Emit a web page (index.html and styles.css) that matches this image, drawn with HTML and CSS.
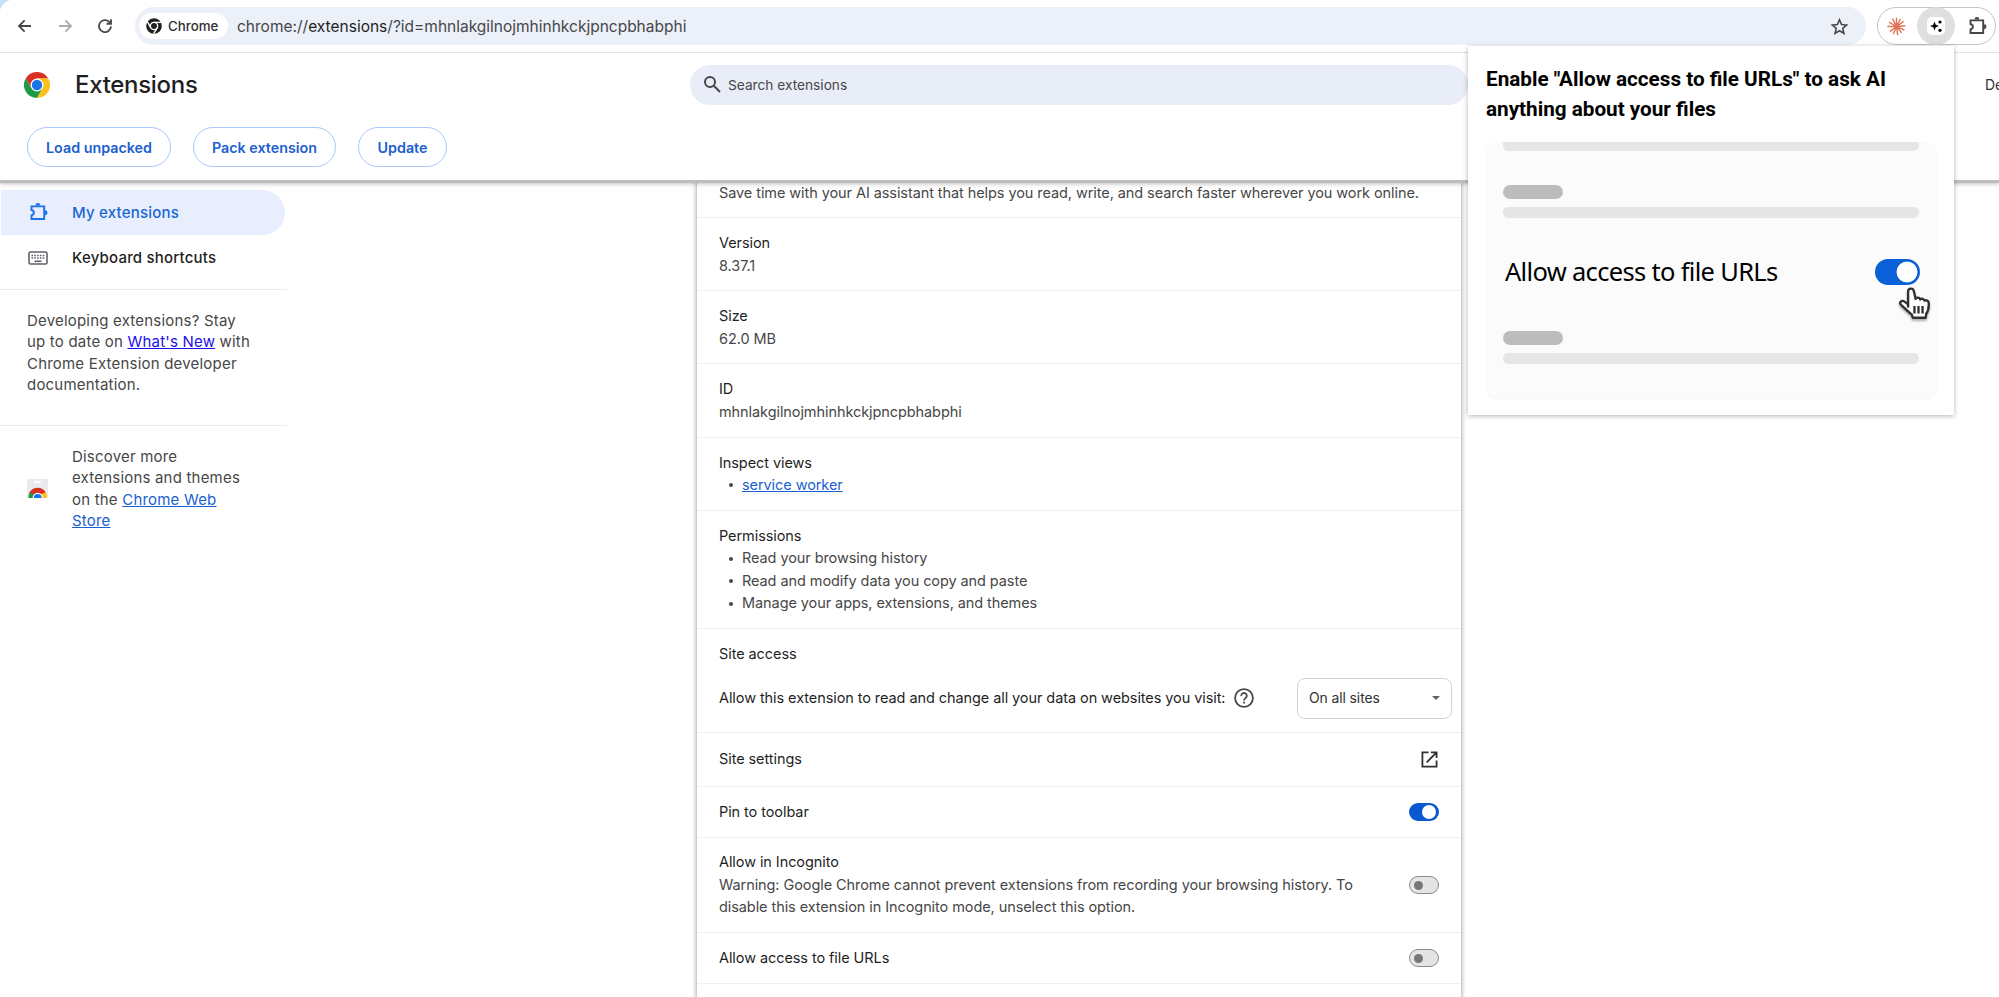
FILE: index.html
```
<!DOCTYPE html>
<html lang="en">
<head>
  <meta charset="UTF-8">
  <title>Extensions</title>
  <link rel="stylesheet" href="styles.css">
</head>
<body>
  <div class="toolbar">
    <div class="nav-buttons">
      <svg class="nav-icon" viewBox="0 0 24 24"><path d="M20 12H4M11.500 4.500L4 12l7.500 7.500"/></svg>
      <svg class="nav-icon disabled" viewBox="0 0 24 24"><path d="M4 12h16M12.500 4.500L20 12l-7.500 7.500"/></svg>
      <svg class="nav-icon" viewBox="0 0 24 24"><path d="M20 12.500a8 8 0 1 1-2.600-6.300L20 8.500M20 3v6h-6"/></svg>
    </div>
    <div class="omnibox">
      <span class="chip">
        <svg width="16" height="16" viewBox="0 0 48 48"><circle cx="24" cy="24" r="23.5" fill="#1f1f1f"/><circle cx="24" cy="24" r="11" fill="none" stroke="#fff" stroke-width="4"/><path d="M24 13h21M14.500 29.500L4 11M33.500 29.500L23 47" stroke="#fff" stroke-width="4"/></svg>
        <span class="chip-text">Chrome</span>
      </span>
      <span class="url">chrome://<span class="host">extensions</span>/?id=mhnlakgilnojmhinhkckjpncpbhabphi</span>
      <svg class="star" viewBox="0 0 24 24"><path d="M12 3.500l2.600 6 6.400.600-4.900 4.300 1.500 6.400L12 17.400l-5.600 3.400 1.500-6.400L3 10.100l6.400-.600z"/></svg>
    </div>
    <div class="ext-box">
      <svg class="claude" viewBox="-12 -12 24 24"><path d="M0 0V-11M0 0l5-9.500M0 0l9-6.500M0 0l11-1M0 0l10 4.500M0 0l6.500 8M0 0l1.500 11M0 0l-4 9.500M0 0l-8.500 6.500M0 0h-11.500M0 0l-9.500-5.500M0 0l-5-10"/></svg>
      <span class="ai-circle"><span class="ai-icon"><svg width="14" height="14" viewBox="0 0 14 14"><path d="M5.500 2.500l1.200 3.300L10 7 6.700 8.200 5.500 11.500 4.300 8.200 1 7l3.300-1.200z"/><circle cx="11" cy="3" r="1.600"/><circle cx="11" cy="11.300" r="1.600"/></svg></span></span>
      <svg class="puzzle" viewBox="0 0 24 24"><path d="M4 5h14.500v14.500H4v-4.200c3.600-.8 3.600-5.300 0-6.100z"/><path class="solid" d="M8.500 4a2.800 2.800 0 0 1 5.600 0zM19.500 9.500a2.800 2.800 0 0 1 0 5.600z"/></svg>
    </div>
  </div>

  <header class="header">
    <div class="header-top">
      <svg class="logo" viewBox="0 0 48 48"><path d="M3.200 12A24 24 0 0 1 44.800 12H24v12L13.600 30z" fill="#d93025"/><path d="M3.200 12A24 24 0 0 0 24 48l10.400-18L24 24l-10.400 6z" fill="#1e9a45"/><path d="M44.800 12A24 24 0 0 1 24 48l10.400-18L24 24V12z" fill="#fcc21b"/><circle cx="24" cy="24" r="12" fill="#fff"/><circle cx="24" cy="24" r="9.600" fill="#1a73e8"/></svg>
      <h1 class="title">Extensions</h1>
      <div class="search">
        <svg width="19" height="19" viewBox="0 0 19 19"><circle cx="7" cy="7" r="5" /><path d="M10.800 10.800L17 17"/></svg>
        <span>Search extensions</span>
      </div>
      <span class="dev-mode">Developer mode</span>
    </div>
    <div class="actions">
      <button class="btn load">Load unpacked</button>
      <button class="btn pack">Pack extension</button>
      <button class="btn update">Update</button>
    </div>
  </header>

  <div class="main">
    <nav class="sidebar">
      <a class="nav-item selected">
        <svg class="puzzle" viewBox="0 0 24 24"><path d="M4 5h14.500v14.500H4v-4.200c3.600-.8 3.600-5.300 0-6.100z"/><path class="solid" d="M8.500 4a2.800 2.800 0 0 1 5.600 0zM19.500 9.500a2.800 2.800 0 0 1 0 5.600z"/></svg>
        <span>My extensions</span>
      </a>
      <a class="nav-item">
        <svg class="keyboard" viewBox="0 0 20 14"><rect x="1" y="1" width="18" height="12" rx="1.500"/><path d="M3.500 4.500h13M3.500 7h13" stroke-dasharray="1.600 1.200"/><path d="M6.500 10.300h7"/></svg>
        <span>Keyboard shortcuts</span>
      </a>
      <p class="dev-note">Developing extensions? Stay<br>up to date on <a class="link-plain" href="#">What's New</a> with<br>Chrome Extension developer<br>documentation.</p>
      <div class="store">
        <svg width="21" height="21" viewBox="0 0 21 21"><rect width="21" height="19" rx="1" fill="#e8eaed"/><rect x="7" y="2" width="7" height="2" rx="1" fill="#fff"/><path d="M1.500 19a9.200 9.200 0 0 1 4-8.500L10.500 19z" fill="#1e9a45"/><path d="M20 19a9.200 9.200 0 0 0-4-8.500L10.500 19z" fill="#fcc21b"/><path d="M2.500 13.500a9.200 9.200 0 0 1 16.200 0l-4.700 1.500H6z" fill="#d93025"/><path d="M5.500 19a5.200 5.200 0 0 1 10.400 0z" fill="#fff"/><path d="M6.700 19a4 4 0 0 1 8 0z" fill="#1a73e8"/></svg>
        <p>Discover more<br>extensions and themes<br>on the <a class="link" href="#">Chrome Web</a><br><a class="link" href="#">Store</a></p>
      </div>
    </nav>

    <div class="card">
      <div class="row desc">Save time with your AI assistant that helps you read, write, and search faster wherever you work online.</div>
      <div class="row"><div class="label">Version</div><div>8.37.1</div></div>
      <div class="row"><div class="label">Size</div><div>62.0 MB</div></div>
      <div class="row"><div class="label">ID</div><div>mhnlakgilnojmhinhkckjpncpbhabphi</div></div>
      <div class="row"><div class="label">Inspect views</div><ul><li><a class="link" href="#">service worker</a></li></ul></div>
      <div class="row permissions">
        <div class="label">Permissions</div>
        <ul>
          <li>Read your browsing history</li>
          <li>Read and modify data you copy and paste</li>
          <li>Manage your apps, extensions, and themes</li>
        </ul>
      </div>
      <div class="row access">
        <div class="label">Site access</div>
        <div class="access-line">
          <span class="label">Allow this extension to read and change all your data on websites you visit:</span>
          <svg class="help" viewBox="0 0 20 20"><circle cx="10" cy="10" r="8.900"/><path d="M7.200 7.900a2.800 2.800 0 1 1 4.400 2.200c-1 .7-1.600 1.100-1.600 2.300"/><path d="M10 13.700v1.700"/></svg>
          <div class="select"><span>On all sites</span><i class="caret"></i></div>
        </div>
      </div>
      <div class="row single settings">
        <span class="label">Site settings</span>
        <svg class="launch" viewBox="0 0 18 18"><path d="M8 1.500H1.500v15h15V10M10.500 1.500h6v6M16.500 1.500L6 12"/></svg>
      </div>
      <div class="row single pin"><span class="label">Pin to toolbar</span><span class="toggle on"></span></div>
      <div class="row single">
        <div><div class="label">Allow in Incognito</div><div>Warning: Google Chrome cannot prevent extensions from recording your browsing history. To<br>disable this extension in Incognito mode, unselect this option.</div></div>
        <span class="toggle"></span>
      </div>
      <div class="row single files"><span class="label">Allow access to file URLs</span><span class="toggle"></span></div>
    </div>
  </div>

  <div class="popup">
    <h2 class="popup-title">Enable "Allow access to file URLs" to ask AI<br>anything about your files</h2>
    <div class="preview">
      <div class="bar cut"></div>
      <div class="pill"></div>
      <div class="bar"></div>
      <div class="preview-row">
        <span class="preview-text">Allow access to file URLs</span>
        <span class="big-toggle">
          <svg class="hand" viewBox="0 0 32 34"><path d="M9.500 19.500V5a2.700 2.700 0 0 1 5.300-.5l1.800 7.700c.8-1.800 3.800-1.500 4.300.6 1.200-1.300 3.600-.8 4 1 1.500-.8 4 .1 4.100 2.300.2 4-.3 7.400-2.500 10.400l-.3 3.500H14l-1-3C8.500 23.500 6 20.500 2.600 17.500c-1.700-1.700.4-4.200 2.700-3.200l3.700 2.600z"/><path d="M15.500 19v7M19.300 19v7M23.100 19v7"/></svg>
        </span>
      </div>
      <div class="pill"></div>
      <div class="bar"></div>
    </div>
  </div>
</body>
</html>
```
FILE: styles.css
```
* {
  box-sizing: border-box;
}

body {
  margin: 0;
  width: 1999px;
  height: 997px;
  overflow: hidden;
  position: relative;
  background: #fff;
  font-family: Inter, "Liberation Sans", sans-serif;
  font-size: 15px;
  color: #474747;
}

h1, h2, p, ul {
  margin: 0;
  padding: 0;
}

svg {
  flex: none;
}

/* browser toolbar */
.toolbar {
  display: flex;
  align-items: center;
  height: 53px;
  padding-left: 16px;
  border-bottom: 1px solid #e3e3e3;
  background: radial-gradient(circle at 14px 14px, #fff 14px, #c9e0fa 15px) 0 0 / 14px 14px no-repeat;
}

.nav-buttons {
  display: flex;
  gap: 22px;
  width: 119px;
}

.nav-icon {
  width: 18px;
  height: 18px;
  fill: none;
  stroke: #474747;
  stroke-width: 2.4;
}

.disabled {
  stroke: #ababab;
}

.omnibox {
  display: flex;
  align-items: center;
  width: 1731px;
  height: 38px;
  padding: 0 17px 0 4px;
  border-radius: 19px;
  background: #ebf0f9;
}

.chip {
  display: flex;
  align-items: center;
  gap: 6px;
  width: 89px;
  height: 26px;
  padding-left: 7px;
  border-radius: 13px;
  background: #fff;
}

.chip-text {
  font-size: 13.3px;
  font-weight: 500;
  color: #303030;
}

.url {
  margin-left: 9px;
  font-size: 15.5px;
  color: #474747;
}

.host {
  color: #1f1f1f;
}

.star {
  width: 19px;
  height: 19px;
  margin-left: auto;
  fill: none;
  stroke: #474747;
  stroke-width: 2;
}

.ext-box {
  display: flex;
  align-items: center;
  width: 119px;
  height: 38px;
  margin-left: 11px;
  padding-left: 9px;
  border: 1px solid #c4c4c4;
  border-radius: 19px;
}

.claude {
  width: 19px;
  height: 19px;
  stroke: #de7356;
  stroke-width: 1.8;
}

.ai-circle {
  display: flex;
  align-items: center;
  justify-content: center;
  width: 38px;
  height: 38px;
  margin-left: 11px;
  border-radius: 50%;
  background: #dfdfdf;
}

.ai-icon {
  display: flex;
  align-items: center;
  justify-content: center;
  width: 18px;
  height: 18px;
  border-radius: 5px;
  background: #fff;
}

.puzzle {
  width: 21px;
  height: 21px;
  fill: none;
  stroke: #474747;
  stroke-width: 2.2;
}

.puzzle .solid {
  fill: #474747;
  stroke: none;
}

.ext-box .puzzle {
  margin-left: 12px;
}

/* page header */
.header {
  position: relative;
  height: 127px;
  background: #fff;
  box-shadow: 0 3px 0 #bdbdbd, 0 4px 4px rgba(0, 0, 0, .25);
}

.header-top {
  display: flex;
  align-items: center;
  height: 63px;
  padding-left: 24px;
}

.logo {
  width: 26px;
  height: 26px;
}

.title {
  width: 615px;
  margin-left: 25px;
  font-size: 24px;
  font-weight: 500;
  letter-spacing: -.3px;
  color: #1f1f1f;
}

.search {
  display: flex;
  align-items: center;
  gap: 6px;
  width: 778px;
  height: 40px;
  padding-left: 13px;
  border-radius: 20px;
  background: #e9edf7;
  font-size: 13.7px;
}

.search svg {
  fill: none;
  stroke: #474747;
  stroke-width: 2;
}

.dev-mode {
  width: 14px;
  margin-left: 517px;
  white-space: nowrap;
  color: #303030;
  font-size: 14px;
}

.actions {
  display: flex;
  gap: 22px;
  padding: 11px 27px;
}

.btn {
  height: 40px;
  padding: 0;
  border: 1px solid #a8c7fa;
  border-radius: 20px;
  background: #fff;
  font-family: inherit;
  font-size: 14.3px;
  font-weight: 600;
  color: #1b5fcf;
}

.load {
  width: 144px;
}

.pack {
  width: 143px;
}

.update {
  width: 89px;
}

.main {
  display: flex;
}

/* sidebar */
.sidebar {
  width: 287px;
  padding-top: 10px;
  letter-spacing: .2px;
}

.nav-item {
  display: flex;
  align-items: center;
  gap: 23px;
  height: 45px;
  margin-right: 2px;
  padding-left: 28px;
  font-weight: 500;
  color: #1f1f1f;
}

.selected {
  margin-left: 1px;
  padding-left: 27px;
  border-radius: 0 23px 23px 0;
  background: #e8eefd;
  color: #1967d2;
}

.selected .puzzle {
  stroke: #1a73e8;
}

.selected .solid {
  fill: #1a73e8;
}

.keyboard {
  width: 20px;
  height: 14px;
  margin-right: 1px;
  fill: none;
  stroke: #5f6368;
  stroke-width: 1.6;
}

.dev-note {
  height: 137px;
  margin-top: 9px;
  padding: 20px 27px;
  border-top: 1px solid #ececec;
  border-bottom: 1px solid #ececec;
  line-height: 21.4px;
}

.store {
  display: flex;
  align-items: center;
  gap: 24px;
  padding: 20px 27px;
  line-height: 21.4px;
}

.store svg {
  margin-top: 2px;
}

.link {
  color: #1a5fd0;
}

.link-plain {
  color: #1a10e8;
}

/* extension details */
.card {
  width: 764px;
  height: 820px;
  margin-left: 410px;
  background: #fff;
  box-shadow: 0 0 5px rgba(0, 0, 0, .45);
  font-size: 14.5px;
  line-height: 22.5px;
  letter-spacing: -.08px;
}

.row {
  height: 73.2px;
  padding: 14px 22px;
  border-bottom: 1px solid #efefef;
}

.desc {
  height: 38px;
  padding-top: 2px;
}

.permissions {
  height: 118.2px;
}

.label {
  color: #1f1f1f;
}

ul {
  list-style: none;
}

li {
  display: flex;
  align-items: center;
}

li::before {
  content: "";
  width: 4px;
  height: 4px;
  margin: 0 9px 0 10px;
  border-radius: 50%;
  background: #474747;
}

.access {
  height: 104.2px;
  padding-right: 9px;
}

.access-line {
  display: flex;
  align-items: center;
  height: 40px;
  margin-top: 13px;
}

.help {
  width: 20px;
  height: 20px;
  margin-left: 9px;
  fill: none;
  stroke: #474747;
  stroke-width: 1.8;
}

.select {
  display: flex;
  align-items: center;
  justify-content: space-between;
  width: 155px;
  height: 41px;
  margin-left: auto;
  padding: 0 11px;
  border: 1px solid #d2d2d2;
  border-radius: 8px;
  font-size: 13.9px;
  color: #303030;
}

.caret {
  border: 4px solid transparent;
  border-top-color: #5f6368;
  border-bottom-width: 0;
}

.single {
  display: flex;
  align-items: center;
  justify-content: space-between;
  height: 95.2px;
}

.settings {
  height: 54px;
}

.pin {
  height: 51px;
}

.files {
  height: 51px;
}

.launch {
  width: 17px;
  height: 17px;
  margin-right: 1px;
  fill: none;
  stroke: #303030;
  stroke-width: 1.9;
}

.toggle {
  display: flex;
  align-items: center;
  flex: none;
  width: 30px;
  height: 18px;
  padding-left: 4px;
  border: 1px solid #8a8d8a;
  border-radius: 9px;
  background: #e3e5e3;
}

.toggle::before {
  content: "";
  width: 9px;
  height: 9px;
  border-radius: 50%;
  background: #747775;
}

.toggle.on {
  padding-left: 13px;
  border: 0;
  background: #0b57d0;
}

.toggle.on::before {
  width: 14px;
  height: 14px;
  background: #fff;
}

/* popup */
.popup {
  position: absolute;
  left: 1468px;
  top: 46px;
  width: 486px;
  height: 369px;
  padding: 18px 17px 17px 18px;
  background: #fff;
  box-shadow: 0 1px 5px rgba(0, 0, 0, .3);
}

.popup-title {
  white-space: nowrap;
  font-family: Roboto, sans-serif;
  font-size: 20.7px;
  font-weight: 700;
  line-height: 30px;
  color: #000;
}

.preview {
  height: 256px;
  margin-top: 18px;
  padding: 0 17px;
  border-radius: 10px;
  background: #fbfbfb;
  box-shadow: 0 1px 2px rgba(0, 0, 0, .05);
}

.bar {
  width: 416px;
  height: 11px;
  margin-top: 8px;
  border-radius: 5px;
  background: #e6e6e6;
}

.bar.cut {
  height: 9px;
  margin: 0 0 34px;
  border-radius: 0 0 5px 5px;
}

.pill {
  width: 60px;
  height: 14px;
  border-radius: 7px;
  background: #bcbcbc;
}

.preview-row {
  display: flex;
  align-items: center;
  justify-content: space-between;
  height: 107px;
  margin-bottom: 6px;
  padding-left: 2px;
}

.preview-text {
  margin-top: -2px;
  font-family: "Noto Sans", sans-serif;
  font-size: 25.5px;
  letter-spacing: -.68px;
  color: #000;
}

.big-toggle {
  position: relative;
  width: 45px;
  height: 26px;
  border-radius: 13px;
  background: radial-gradient(circle at 32px 13px, #fff 10px, #0a60d6 10.8px);
}

.hand {
  position: absolute;
  left: 23px;
  top: 27px;
  width: 34px;
  height: 36px;
  fill: #fff;
  stroke: #303030;
  stroke-width: 2.2;
  stroke-linejoin: round;
  filter: drop-shadow(0 2px 1px rgba(0, 0, 0, .3));
}
```
